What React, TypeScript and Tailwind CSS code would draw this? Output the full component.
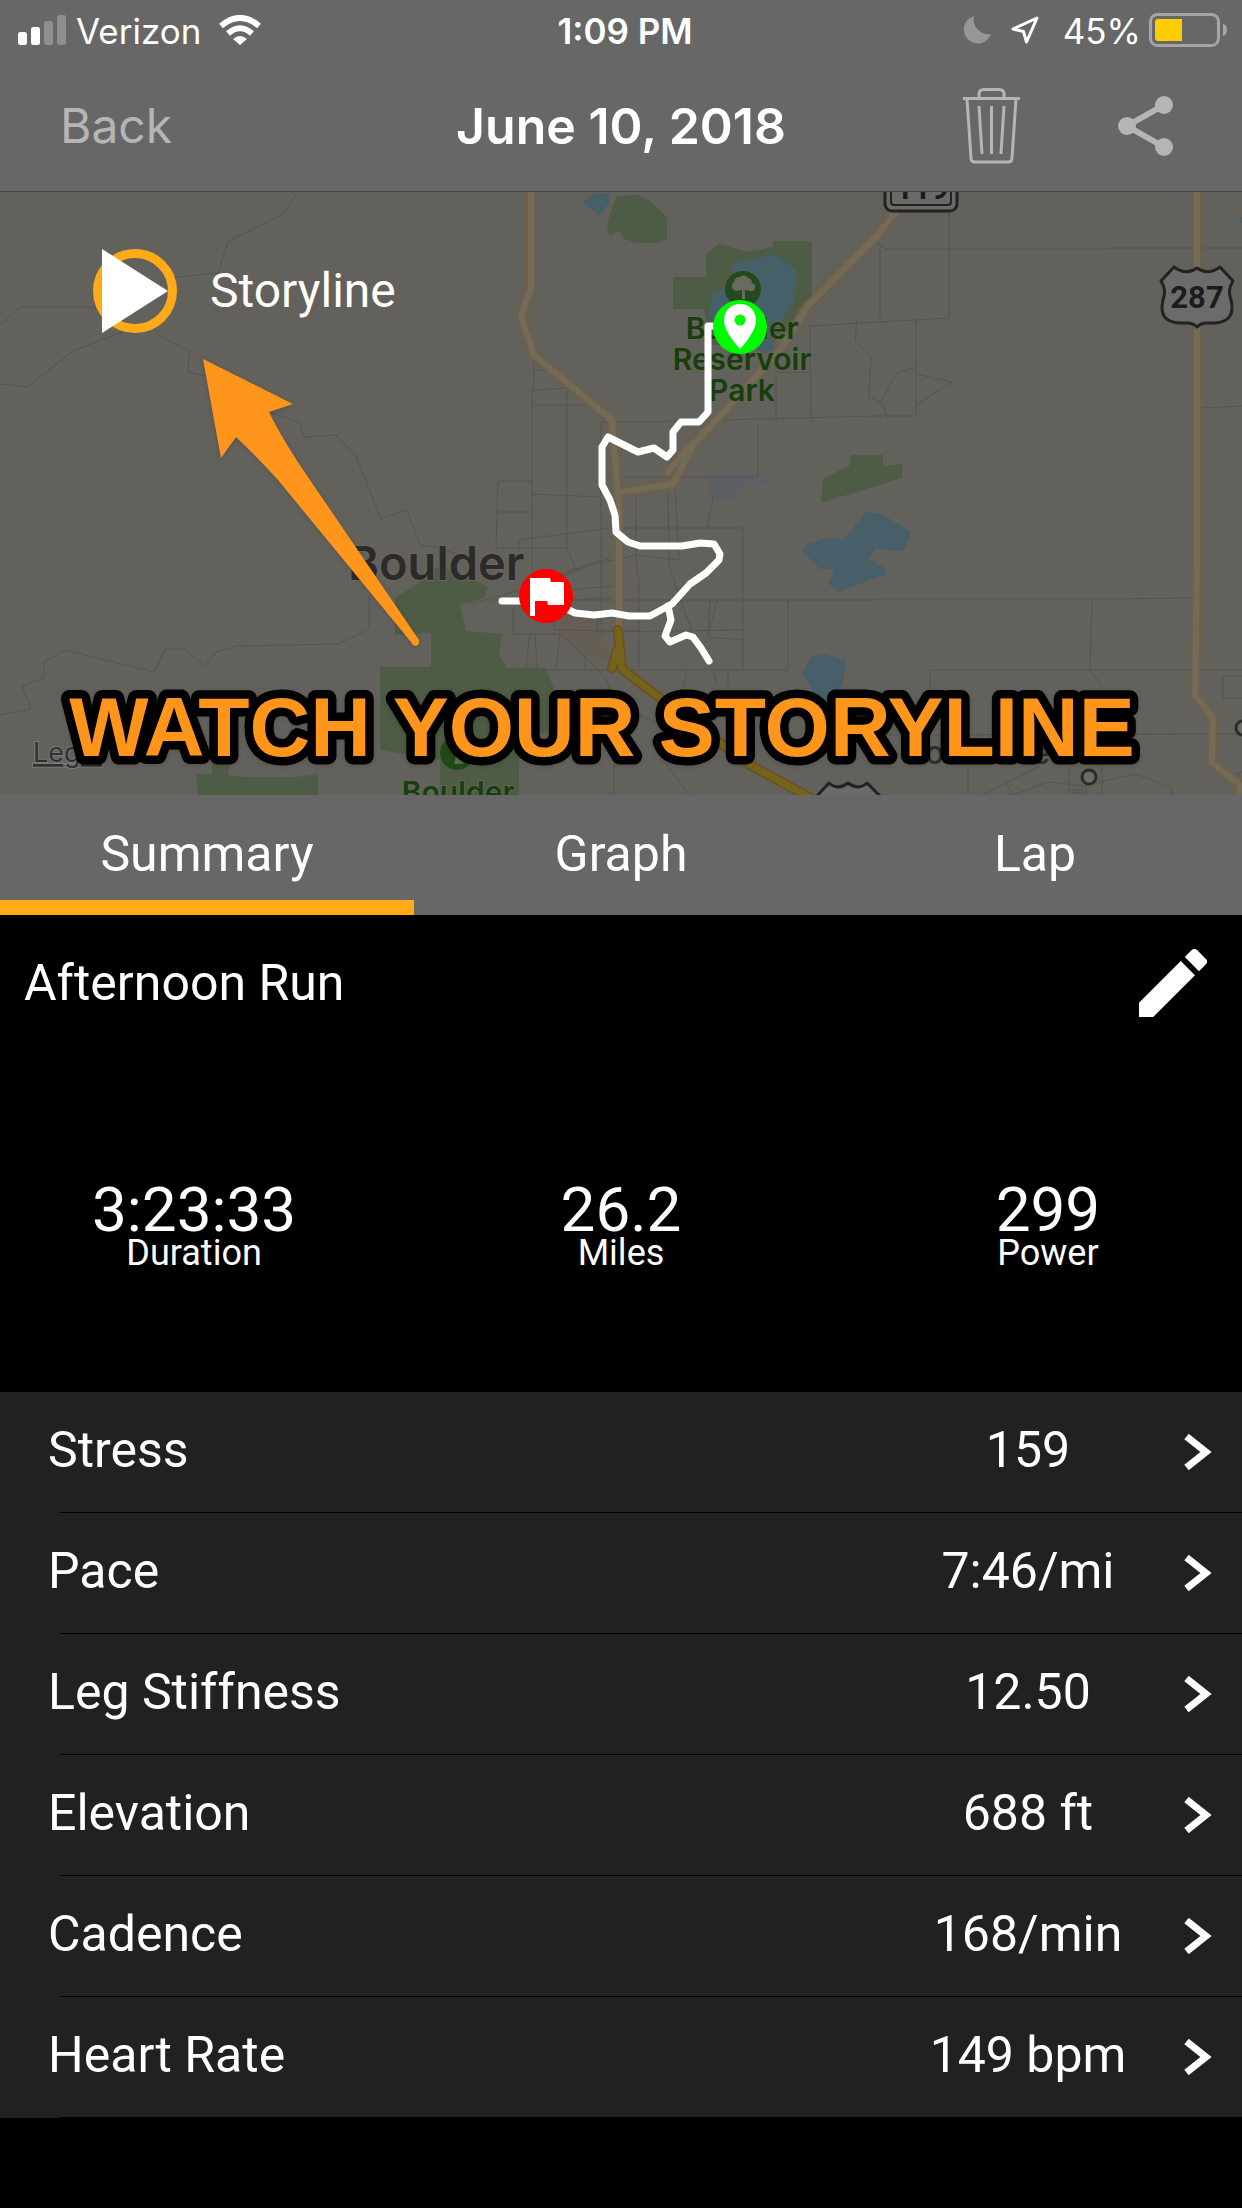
import React from "react";

const INK = "#555450";

const minorRoads = [
  "M0 325 L20 307 H96",
  "M0 384 L27 387 L73 351 L122 332 L150 320",
  "M297 193 L284 214 L228 241 L218 273 Q190 276 175 277 L160 283",
  "M155 330 L158 335 L189 351 L188 372 L206 376",
  "M272 413 L299 422 L304 437 L336 435 L356 456 L381 519 L407 510 L420 545 L440 548 L462 556",
  "M0 715 L31 709 L22 686 L44 678 V662 L65 650 L154 672 L165 649 H185 L205 667 L216 652 L237 646 L338 644 L369 629 V597",
  "M534 362 V390 L532 390 V610",
  "M532 390 L568 388 M532 405 H588 M567 390 V550 M534 371 L545 370",
  "M601 422 H640 L720 420 L800 418 L872 416 H916",
  "M601 422 V625 M606 477 H758 V424",
  "M498 481 H532 M498 481 L496 548 H567 L577 572 M496 512 H532",
  "M532 494 L600 497 M636 493 V560 L639 583 V668 M668 485 L669 565 L684 610 L692 630",
  "M675 488 L679 560 L637 555 L600 563 M714 493 L707 530",
  "M519 550 L519 540 L610 528 H743 V670",
  "M560 577 L610 558 M567 590 L613 586 M570 600 L610 598",
  "M470 604 L520 590 L600 560",
  "M490 600 H870 L875 599 L1105 599 L1192 598",
  "M513 608 V634 H560 M530 634 L526 668 M560 634 L556 668 M535 634 L537 668",
  "M505 670 H788 V600",
  "M554 615 V630 L640 631 M598 610 L597 632 L743 630",
  "M560 634 Q590 660 606 680 L616 705 L640 715 L690 740",
  "M585 655 V668 M687 670 L683 690 M713 670 L717 685 M728 670 V685",
  "M710 600 L708 637 L743 640 M717 600 L708 635",
  "M614 720 V795 M650 742 L689 795 M650 742 L670 728",
  "M876 243 L886 249 L1107 249 L1110 248 H1242",
  "M880 248 V318 M949 212 V318 L809 326",
  "M810 326 V372 M776 372 H811 V415 M776 372 V421 M812 418 V423",
  "M857 319 L855 341 L871 357 L869 397 L881 402 L888 419",
  "M881 402 L896 374 L916 367 M916 318 V415 M916 374 L952 382 L916 405",
  "M1202 408 L1242 406",
  "M1092 600 L1090 670 L1103 687",
  "M930 690 V670 H1242 M1223 676 H1242 M1223 676 V698 H1242",
  "M968 755 V795 M880 735 L1242 734 M1102 760 V795",
  "M982 795 L1006 783 L1040 766 M1006 783 L1013 795 L1048 782 L1085 786 L1100 782 L1136 774 L1172 788 V795",
  "M1069 768 V792 L1086 793 V780 M1069 790 H1084",
  "M1233 776 L1242 772",
];

const highways = [
  "M531 190 V288 L521 317 L534 355 L612 420 L617 485 L619 505 V630",
  "M620 492 L673 484 L693 445 L709 428 L780 350 L807 307 L877 236 L897 210",
  "M668 472 L693 443",
  "M1197 190 V570 L1195 695 L1213 718 L1212 763 L1240 785 V800",
];

const arterials = ["M618 630 L622 669 L653 693 L720 743 L750 765 L820 803", "M612 668 L617 650"];

function CourseMap() {
  return (
    <svg
      className="block h-[603px] w-full"
      viewBox="0 192 1242 603"
      preserveAspectRatio="xMidYMid slice"
      role="img"
      aria-label="Map of the run through Boulder"
    >
      <rect x="-600" y="192" width="2600" height="603" fill="#63615c" />
      <g fill="#4e5b45">
        <path d="M617 196 L638 195 L650 201 L667 217 V240 L658 243 H637 L624 239 L620 231 L609 236 L607 224 L611 211 Z" />
        <path d="M673 277 H706 V254 L719 244 L748 252 L773 247 V241 H812 V300 L790 330 L770 345 H712 L704 309 H673 Z" />
        <path d="M851 455 H883 V466 L902 464 V478 L821 503 L823 479 L850 465 Z" />
        <path d="M395 598 L420 582 L440 565 L475 580 L488 587 L484 598 L460 605 L466 631 L502 634 L499 656 L507 668 H545 L553 686 V733 L519 733 V795 H440 V760 L380 750 V667 H431 V633 L395 635 Z" />
        <path d="M196 773 L212 775 V762 L232 750 L228 775 L245 777 H296 L318 774 V795 H198 Z" />
      </g>
      <path d="M560 613 L600 620 L610 660 L590 656 L558 634 Z" fill="#655e52" opacity="0.8" />
      <g fill="#485f6a">
        <path d="M582 202 L596 193 H609 V203 L600 216 Z" />
        <path d="M852 530 L865 512 L882 514 L911 532 L904 551 L875 549 L868 558 L886 569 V574 L838 592 L828 583 L835 569 H820 L803 552 L806 544 L832 537 L843 540 Z" />
        <path d="M802 673 L811 657 L825 654 L846 660 L843 683 L833 700 L815 720 L795 716 L812 690 Z" />
        <path d="M1239 223 L1242 216 V223 Z" />
      </g>
      <path d="M730 265 L775 254 L797 270 L794 300 L772 340 L774 350 L762 354 L740 330 L708 318 L713 292 L740 285 Z" fill="#46606a" />
      <path d="M709 474 H772 V483 L745 487 L733 500 H709 Z" fill="#5c6064" />

      <g fill="none" stroke={INK} strokeWidth="1">
        {minorRoads.map((d) => (
          <path key={d} d={d} />
        ))}
      </g>
      <g fill="none" strokeLinejoin="round" strokeLinecap="round">
        {highways.map((d) => (
          <path key={d} d={d} stroke="#745f46" strokeWidth="10" />
        ))}
        {highways.map((d) => (
          <path key={d} d={d} stroke="#716b58" strokeWidth="6" />
        ))}
        {arterials.map((d) => (
          <path key={d} d={d} stroke="#6d4f22" strokeWidth="10" />
        ))}
        {arterials.map((d) => (
          <path key={d} d={d} stroke="#74631b" strokeWidth="7" />
        ))}
      </g>

      <g fontFamily="Roboto, sans-serif" fontWeight="700" textAnchor="middle" fill="#1c1c1c">
        <rect x="885" y="160" width="72" height="51" rx="7" fill="#6a6a69" stroke="#222" strokeWidth="3" />
        <rect x="891" y="160" width="60" height="45" rx="3" fill="none" stroke="#222" strokeWidth="2" />
        <text x="922" y="199" fontSize="31">119</text>
        <path
          d="M1174 267 Q1186 276 1197 268 Q1208 276 1220 267 L1233 281 Q1227 290 1231 300 Q1236 321 1216 323 H1207 Q1201 323 1197 327 Q1193 323 1187 323 H1178 Q1158 321 1163 300 Q1167 290 1161 281 Z"
          fill="#6b6b6b"
          stroke="#222"
          strokeWidth="3"
          strokeLinejoin="round"
        />
        <text x="1197" y="308" fontSize="31">287</text>
      </g>
      <path
        d="M817 796 L829 783 Q838 791 848 783 Q858 791 867 783 L880 796"
        fill="#6b6b6b"
        stroke="#222"
        strokeWidth="3"
        strokeLinejoin="round"
      />
      <g fill="#6b6b6b" stroke="#2b2a29" strokeWidth="3">
        <circle cx="1089" cy="777" r="7" />
        <circle cx="1243" cy="728" r="7" />
      </g>

      <circle cx="743" cy="289" r="18" fill="#264a1d" />
      <path
        d="M742 299 V290 L736 291 A5 5 0 0 1 734 282 A6 6 0 0 1 740 277 A5 5 0 0 1 748 278 A5 5 0 0 1 752 283 A4 4 0 0 1 750 291 L745 290 V299 Z"
        fill="#686b60"
      />
      <circle cx="457" cy="753" r="17" fill="#1f4a18" />
      <path d="M454 764 L456 756 L450 748 H463 L458 757 L464 764 Z" fill="#59704f" />

      <g
        fontFamily="Inter, sans-serif"
        fontWeight="600"
        textAnchor="middle"
        fontSize="30"
        fill="#183e0b"
        stroke="#63665a"
        strokeWidth="2"
        paintOrder="stroke"
      >
        <text x="742" y="339">Boulder</text>
        <text x="742" y="370">Reservoir</text>
        <text x="742" y="401">Park</text>
        <text x="458" y="803">Boulder</text>
      </g>
      <text x="348" y="580" fontFamily="Inter, sans-serif" fontWeight="600" fontSize="47" fill="#2d2b29" stroke="#696762" strokeWidth="2" paintOrder="stroke">
        Boulder
      </text>
      <text x="33" y="762" fontFamily="Inter, sans-serif" fontSize="27" fill="#31302e" stroke="#7c7a76" strokeWidth="2" paintOrder="stroke" textDecoration="underline">
        Legal
      </text>
      <text x="907" y="764" fontFamily="Inter, sans-serif" fontWeight="500" fontSize="32" fill="#2f2e2c">
        Louisville
      </text>

      <g fill="none" stroke="#fff" strokeWidth="7" strokeLinejoin="round" strokeLinecap="round">
        <path d="M740 326 H708 V412 L699 422 H681 L673 432 V450 L667 457 L654 448 L638 452 L608 437 L602 447 V485 L610 500 L615 515 L616 532 L628 542 L640 546 H682 L700 543 L714 544 L720 554 L719 560 L706 573 L690 584 L672 604 L650 616 H629 L612 613 L594 615 L575 613 L567 609 L546 598 L522 601 H502" />
        <path d="M668 606 L671 620 L665 636 L670 642 L686 635 L693 637 L701 648 L709 661" />
      </g>
      <circle cx="740" cy="327" r="27" fill="#00fb00" />
      <path d="M740 304 C730 304 724 311 724 321 C724 332 740 349 740 349 C740 349 756 332 756 321 C756 311 750 304 740 304 Z" fill="#fff" />
      <circle cx="740" cy="320" r="5.500" fill="#00fb00" />
      <circle cx="546" cy="596" r="27" fill="#fe0000" />
      <path d="M530 578 H550 L551 582 H564 V605 H548 L547 601 H535 V616 H530 Z" fill="#fff" />
    </svg>
  );
}

function Annotation() {
  return (
    <svg
      className="pointer-events-none absolute inset-0 h-full w-full"
      viewBox="0 192 1242 603"
      preserveAspectRatio="xMidYMid slice"
    >
      <path
        className="drop-shadow-sm"
        d="M203 359 L293 404 L269 412 Q283 441 310 480 L419 640 Q420 645 416 646 Q413 646 411 642 L278 480 Q262 462 236 437 L221 458 Z"
        fill="#ff951b"
      />
      <text
        className="drop-shadow-sm"
        x="602"
        y="756"
        textAnchor="middle"
        fontFamily="'Liberation Sans', Arial, sans-serif"
        fontWeight="700"
        fontSize="84"
        fill="#ff951b"
        stroke="#000"
        strokeWidth="17"
        strokeLinejoin="round"
        paintOrder="stroke"
      >
        WATCH YOUR STORYLINE
      </text>
    </svg>
  );
}

function StatusBar() {
  return (
    <div className="grid h-15 grid-cols-[1fr_auto_1fr] items-center font-[Inter,sans-serif] text-[35px] leading-none">
      <div className="flex items-center gap-2.5 pl-[18px]">
        <svg className="h-[30px] w-12" viewBox="0 0 48 30" fill="#fff" aria-label="Signal">
          <rect y="17" width="9" height="13" rx="2.500" />
          <rect x="13" y="12" width="9" height="18" rx="2.500" />
          <rect x="26" y="6" width="9" height="24" rx="2.500" fill="#8f8f8f" />
          <rect x="39" width="9" height="30" rx="2.500" fill="#8f8f8f" />
        </svg>
        <span className="pt-0.5">Verizon</span>
        <svg className="ml-2 h-[30px] w-[42px]" viewBox="0 0 42 30" aria-label="Wi-Fi">
          <g fill="none" stroke="#fff" strokeWidth="6">
            <path d="M2 11 Q21 -5 40 11" />
            <path d="M9 18.500 Q21 8 33 18.500" />
          </g>
          <path d="M14 24 Q21 18 28 24 L21 30 Z" fill="#fff" />
        </svg>
      </div>
      <span className="pt-0.5 pl-2 font-semibold">1:09 PM</span>
      <div className="flex items-center justify-end pr-[14px]">
        <svg className="h-[28px] w-[27px]" viewBox="0 0 27 28" aria-label="Do not disturb">
          <path d="M10 0 A14 14 0 1 0 27 18 A15 15 0 0 1 10 0 Z" fill="#979797" />
        </svg>
        <svg className="ml-5 h-[28px] w-[28px]" viewBox="0 0 28 28" aria-label="Location">
          <path d="M26 2 L2 13 L12.500 15.500 L15.500 26 Z" fill="none" stroke="#fff" strokeWidth="3" strokeLinejoin="round" />
        </svg>
        <span className="pt-0.5 pl-6">45%</span>
        <svg className="ml-2 h-[34px] w-[79px]" viewBox="0 0 79 34" aria-label="Battery">
          <rect x="1.500" y="1.500" width="68" height="31" rx="7" fill="none" stroke="#a5a5a5" strokeWidth="3" />
          <path d="M74 11 Q78 12 78 17 Q78 22 74 23 Z" fill="#a5a5a5" />
          <path d="M9 6 H33 V28 H9 Q6 28 6 25 V9 Q6 6 9 6 Z" fill="#fc0" />
        </svg>
      </div>
    </div>
  );
}

function NavBar() {
  return (
    <div className="grid h-[131px] grid-cols-[1fr_auto_1fr] items-center font-[Inter,sans-serif] text-[50px] leading-none">
      <a href="#back" className="justify-self-start pl-[60px] text-[48px] text-[#b5b5b5]">
        Back
      </a>
      <h1 className="font-semibold">June 10, 2018</h1>
      <div className="flex items-center justify-end gap-[98px] pr-[69px] text-[#b5b5b5]">
        <button type="button" aria-label="Delete">
          <svg className="h-[76px] w-[57px]" viewBox="0 0 57 76" fill="none" stroke="currentColor">
            <path d="M0 10.500 H57 M16 10 V6 Q16 1.500 21 1.500 H36 Q41 1.500 41 6 V10" strokeWidth="3" />
            <path d="M4 11 L8 70 Q8 74 12 74 H45 Q49 74 49 70 L53 11" strokeWidth="3" />
            <path d="M16 18 L19 66 M28.500 18 V66 M41 18 L38 66" strokeWidth="3" />
          </svg>
        </button>
        <button type="button" aria-label="Share">
          <svg className="h-15 w-[55px]" viewBox="0 0 55 60" fill="currentColor">
            <path d="M46 9 L9 30 L46 51" fill="none" stroke="currentColor" strokeWidth="6" />
            <circle cx="46" cy="9" r="9" />
            <circle cx="9" cy="30" r="9" />
            <circle cx="46" cy="51" r="9" />
          </svg>
        </button>
      </div>
    </div>
  );
}

const tabs = ["Summary", "Graph", "Lap"];

const totals = [
  { value: "3:23:33", label: "Duration" },
  { value: "26.2", label: "Miles" },
  { value: "299", label: "Power" },
];

const metrics = [
  { label: "Stress", value: "159" },
  { label: "Pace", value: "7:46/mi" },
  { label: "Leg Stiffness", value: "12.50" },
  { label: "Elevation", value: "688 ft" },
  { label: "Cadence", value: "168/min" },
  { label: "Heart Rate", value: "149 bpm" },
];

export default function App() {
  return (
    <div className="min-h-screen bg-black font-[Roboto,sans-serif] text-[50px] leading-none text-white">
      <header className="border-b border-[#454442] bg-[#676767]">
        <StatusBar />
        <NavBar />
      </header>

      <section className="relative overflow-hidden">
        <CourseMap />
        <button type="button" className="absolute top-14 left-[93px] flex items-center gap-[31px]">
          <svg className="h-[86px] w-[86px]" viewBox="0 0 86 86">
            <circle cx="42" cy="43" r="37.500" fill="none" stroke="#ffab17" strokeWidth="9" />
            <path d="M9 1 L75 43 L9 85 Z" fill="#fff" />
          </svg>
          <span className="text-[48px]">Storyline</span>
        </button>
        <Annotation />
      </section>

      <div role="tablist" className="grid h-[120px] grid-cols-3 bg-[#676767]">
        {tabs.map((tab, i) => (
          <button
            key={tab}
            type="button"
            role="tab"
            aria-selected={i === 0}
            className="border-b-[15px] border-transparent pt-3 aria-selected:border-[#ffab17]"
          >
            {tab}
          </button>
        ))}
      </div>

      <div className="flex h-[136px] items-center justify-between pr-[35px] pl-6">
        <h2>Afternoon Run</h2>
        <button type="button" aria-label="Edit name">
          <svg className="h-[68px] w-[68px]" viewBox="3 3 18 18" fill="#fff">
            <path d="M3 17.250V21h3.750L17.810 9.940l-3.750-3.750L3 17.250zM20.710 7.040a1 1 0 0 0 0-1.410l-2.340-2.340a1 1 0 0 0-1.410 0l-1.830 1.830 3.750 3.750 1.830-1.830z" />
          </svg>
        </button>
      </div>

      <dl className="grid h-[341px] grid-cols-[5fr_6fr_5fr] pt-[132px] text-center">
        {totals.map((t) => (
          <div key={t.label} className="flex flex-col-reverse justify-end">
            <dt className="text-[36px] leading-8">{t.label}</dt>
            <dd className="text-[62px] leading-[54px]">{t.value}</dd>
          </div>
        ))}
      </dl>

      <ul className="bg-[#202123]">
        {metrics.map((m) => (
          <li key={m.label}>
            <button type="button" className="flex h-[120px] w-full items-center pr-[30px] pb-1 pl-12 text-left">
              <span className="flex-1">{m.label}</span>
              <span className="w-60 text-center">{m.value}</span>
              <svg className="mt-1 ml-9 h-9 w-7" viewBox="0 0 28 36" fill="none" stroke="#fff" strokeWidth="7">
                <path d="M2.500 2.500 L22 18 L2.500 33.500" />
              </svg>
            </button>
            <div className="ml-15 h-px bg-black" />
          </li>
        ))}
      </ul>
    </div>
  );
}
